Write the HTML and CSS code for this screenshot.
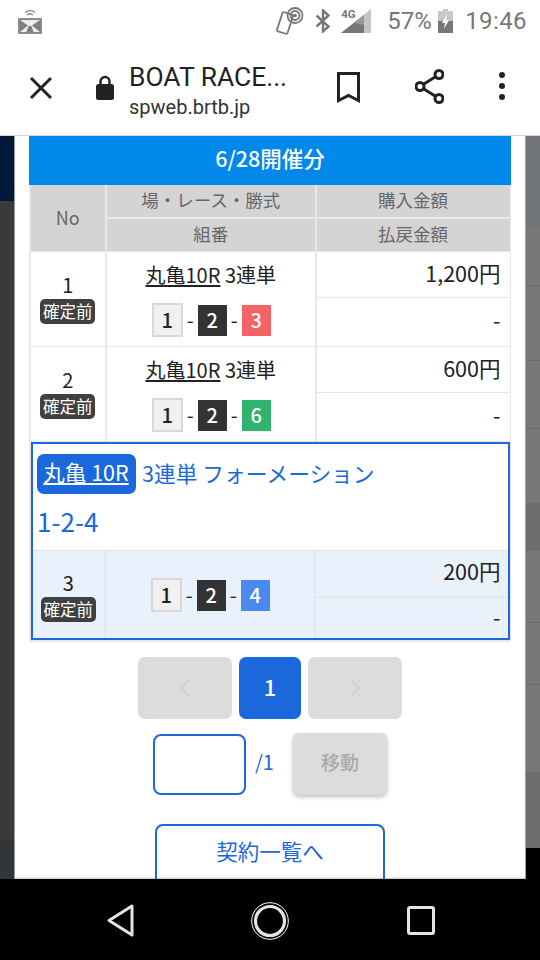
FILE: index.html
```html
<!DOCTYPE html>
<html lang="ja">
<head>
<meta charset="utf-8">
<title>BOAT RACE</title>
<link rel="stylesheet" href="styles.css">
</head>
<body>
<div class="phone">
  <header class="status">
    <svg class="ic-cast" viewBox="0 0 24 26"><g fill="none" stroke="#8a8a8a" stroke-width="1.4"><path d="M7 4.500a8 8 0 0 1 10 0"/><path d="M9 7a4.600 4.600 0 0 1 6 0"/></g><rect x="0" y="10" width="24" height="16" rx="1" fill="#8a8a8a"/><rect x="2" y="12" width="20" height="12" fill="#ececec"/><path d="M2 12l8 5.500L2 24zM22 12l-8 5.500 8 6.500zM10.500 18h3l2 6h-7z" fill="#808080"/></svg>
    <div class="status-right">
      <svg class="ic-nfc" viewBox="0 0 29 29"><g fill="none" stroke="#777" stroke-width="1.800"><rect x="4.500" y="6" width="11" height="20" rx="1.500" transform="rotate(18 10 16)"/><circle cx="20" cy="8.500" r="7.500"/><circle cx="20" cy="8.500" r="4.500"/></g><circle cx="20" cy="8.500" r="1.800" fill="#777"/></svg>
      <svg class="ic-bt" viewBox="0 0 16 24"><path d="M1.500 6.500l12 11-5.500 5V1.500l5.500 5-12 11" fill="none" stroke="#777" stroke-width="2.400"/></svg>
      <div class="net"><span class="net-label">4G</span><svg class="ic-sig" viewBox="0 0 30 24"><path d="M30 0v24H0z" fill="#c4c4c4"/><path d="M23 6v18H0z" fill="#777"/><path d="M23 6v10l-9-2z" fill="#999"/></svg></div>
      <span class="pct">57%</span>
      <svg class="ic-bat" viewBox="0 0 15 24"><path d="M5 0h5v2h5v22H0V2h5z" fill="#c8c8c8"/><path d="M0 12h15v12H0z" fill="#777"/><path d="M9 5L4 14h3l-1 6 5-9H8z" fill="#fff"/></svg>
      <span class="time">19:46</span>
    </div>
  </header>

  <nav class="toolbar">
    <svg class="ic-close" viewBox="0 0 24 24"><path d="M2 2l20 20M22 2L2 22" stroke="#222" stroke-width="3" fill="none"/></svg>
    <svg class="ic-lock" viewBox="0 0 18 25"><path d="M4.500 10V6.500a4.500 4.500 0 0 1 9 0V10" fill="none" stroke="#222" stroke-width="2.400"/><rect y="9" width="18" height="16" rx="2.500" fill="#222"/></svg>
    <div class="page-id">
      <div class="page-title">BOAT RACE...</div>
      <div class="page-url">spweb.brtb.jp</div>
    </div>
    <svg class="ic-mark" viewBox="0 0 23 31"><path d="M1.500 1.500h20v27l-10-5-10 5z" fill="none" stroke="#222" stroke-width="3"/></svg>
    <svg class="ic-share" viewBox="0 0 29 35"><g fill="none" stroke="#222" stroke-width="3"><circle cx="24" cy="5.500" r="4"/><circle cx="5" cy="17.500" r="4"/><circle cx="24" cy="29.500" r="4"/><path d="M8.500 15.300L20.500 7.700M8.500 19.700l12 7.600"/></g></svg>
    <svg class="ic-more" viewBox="0 0 6 28"><circle cx="3" cy="3" r="3" fill="#222"/><circle cx="3" cy="14" r="3" fill="#222"/><circle cx="3" cy="25" r="3" fill="#222"/></svg>
  </nav>

  <main class="stage">
    <div class="side side-left">
      <div class="bl-navy"></div>
      <div class="bl-dark"></div>
      <div class="bl-slate"></div>
    </div>

    <section class="modal">
      <h2 class="day-head">6/28開催分</h2>

      <div class="table">
        <div class="row row-head">
          <div class="cell head-no">No</div>
          <div class="stack">
            <div class="cell head-cell">場・レース・勝式</div>
            <div class="cell head-cell">組番</div>
          </div>
          <div class="stack">
            <div class="cell head-cell">購入金額</div>
            <div class="cell head-cell">払戻金額</div>
          </div>
        </div>

        <div class="row row-item">
          <div class="cell no-cell"><span class="no">1</span><span class="badge">確定前</span></div>
          <div class="cell bet-cell">
            <div class="bet-name"><a class="race-link">丸亀10R</a> 3連単</div>
            <div class="combo"><span class="tile t1">1</span>-<span class="tile t2">2</span>-<span class="tile t3">3</span></div>
          </div>
          <div class="stack">
            <div class="cell amount amt-top">1,200円</div>
            <div class="cell amount amt-bot">-</div>
          </div>
        </div>

        <div class="row row-item">
          <div class="cell no-cell"><span class="no">2</span><span class="badge">確定前</span></div>
          <div class="cell bet-cell">
            <div class="bet-name"><a class="race-link">丸亀10R</a> 3連単</div>
            <div class="combo"><span class="tile t1">1</span>-<span class="tile t2">2</span>-<span class="tile t6">6</span></div>
          </div>
          <div class="stack">
            <div class="cell amount amt-top">600円</div>
            <div class="cell amount amt-bot">-</div>
          </div>
        </div>

        <div class="selected">
          <div class="sel-info">
            <div class="sel-line"><a class="race-pill">丸亀 10R</a><span class="sel-type">3連単 フォーメーション</span></div>
            <div class="sel-combo">1-2-4</div>
          </div>
          <div class="row row-sel">
            <div class="cell no-cell"><span class="no">3</span><span class="badge">確定前</span></div>
            <div class="cell bet-cell">
              <div class="combo"><span class="tile t1">1</span>-<span class="tile t2">2</span>-<span class="tile t4">4</span></div>
            </div>
            <div class="stack">
              <div class="cell amount amt-top">200円</div>
              <div class="cell amount amt-bot">-</div>
            </div>
          </div>
        </div>
      </div>

      <div class="pager">
        <button class="pg pg-arrow"><svg class="chev" viewBox="0 0 12 20"><path d="M11 1L2 10l9 9" fill="none" stroke="#cfcfcf" stroke-width="1.600"/></svg></button>
        <button class="pg pg-on">1</button>
        <button class="pg pg-arrow"><svg class="chev" viewBox="0 0 12 20"><path d="M1 1l9 9-9 9" fill="none" stroke="#cfcfcf" stroke-width="1.600"/></svg></button>
      </div>

      <div class="jump">
        <div class="jump-input"></div>
        <span class="jump-total">/1</span>
        <button class="jump-btn">移動</button>
      </div>

      <a class="back-btn">契約一覧へ</a>
    </section>

    <div class="side side-right">
      <div class="br br1"></div>
      <div class="br br2"></div>
      <div class="br br3"></div>
      <div class="br br4"></div>
      <div class="br br5"></div>
      <div class="br br6"></div>
      <div class="br br7"></div>
      <div class="br br8"></div>
      <div class="br br9"></div>
      <div class="br br10"></div>
    </div>
  </main>

  <footer class="navbar">
    <svg class="ic-back" viewBox="0 0 27 33"><path d="M25 2v29L2 16.500z" fill="none" stroke="#e4e4e4" stroke-width="3" stroke-linejoin="round"/></svg>
    <svg class="ic-home" viewBox="0 0 38 38"><circle cx="19" cy="19" r="18.300" fill="none" stroke="#fff" stroke-width="1"/><circle cx="19" cy="19" r="14.500" fill="none" stroke="#e4e4e4" stroke-width="3.200"/></svg>
    <svg class="ic-recent" viewBox="0 0 28 29"><rect x="1.500" y="1.500" width="25" height="26" rx="1.500" fill="none" stroke="#e4e4e4" stroke-width="3"/></svg>
  </footer>
</div>
</body>
</html>
```

FILE: styles.css
```css
* { box-sizing: border-box; }
html, body { margin: 0; padding: 0; background: #000; }
body { font-family: "Noto Sans CJK JP", "Noto Sans", sans-serif; color: #222; }
svg { display: block; flex: none; }
a { color: inherit; }
button { font-family: inherit; border: 0; padding: 0; }

.phone { width: 540px; height: 960px; display: flex; flex-direction: column; overflow: hidden; }

/* status bar */
.status { height: 38px; flex: none; background: #fff; display: flex; justify-content: space-between; align-items: flex-start; padding: 8px 13px 0 18px; }
.status-right { display: flex; align-items: flex-start; margin-top: -1px; }
.ic-cast { width: 24px; height: 26px; }
.ic-nfc { width: 29px; height: 29px; margin-right: 11px; }
.ic-bt { width: 16px; height: 24px; margin: 2px 10px 0 0; }
.net { position: relative; width: 30px; height: 24px; margin: 2px 16px 0 0; }
.net-label { position: absolute; left: 0; top: -1px; font: 700 11.500px/12px Roboto, sans-serif; color: #777; }
.ic-sig { width: 30px; height: 24px; }
.pct { font: 400 24px/28px Roboto, sans-serif; color: #777; margin: 0 9px 0 0; width: 42px; white-space: nowrap; }
.ic-bat { width: 15px; height: 24px; margin: 2px 12px 0 0; }
.time { font: 400 24px/28px Roboto, sans-serif; color: #777; letter-spacing: .4px; white-space: nowrap; }

/* toolbar */
.toolbar { height: 98px; flex: none; background: #fff; border-bottom: 1px solid #d8d8d8; display: flex; align-items: center; padding: 0 0 6px 29px; }
.ic-close { width: 24px; height: 24px; margin: 8px 43px 0 0; }
.ic-lock { width: 18px; height: 25px; margin: 8px 15px 0 0; }
.page-id { width: 208px; flex: none; margin-top: 15px; font-family: Roboto, sans-serif; }
.page-title { font-size: 26.400px; line-height: 30px; color: #222; white-space: nowrap; }
.page-url { font-size: 20px; line-height: 26px; margin-top: 2px; color: #333; white-space: nowrap; }
.ic-mark { width: 23px; height: 31px; margin: 8px 55px 0 0; }
.ic-share { width: 29px; height: 35px; margin: 5px 55px 0 0; }
.ic-more { width: 6px; height: 28px; margin-top: 5px; }

/* stage */
.stage { flex: 1; min-height: 0; display: flex; overflow: hidden; }
.side { width: 15px; flex: none; display: flex; flex-direction: column; }
.side-left { border-right: 1px solid #9a9a9a; }
.bl-navy { height: 65px; background: #021838; }
.bl-dark { flex: 1; background: #3a3a3a; }
.bl-slate { height: 40px; background: #32363b; }
.side-right { border-left: 1px solid #a4a4a4; }
.br { flex: none; border-bottom: 1px solid #6a6a6a; background: #777; }
.br1 { height: 91px; background: #717579; border-bottom: 0; }
.br2 { height: 59px; }
.br3 { height: 75px; }
.br4 { height: 68px; }
.br5 { height: 74px; border-bottom: 0; }
.br6 { height: 47px; background: #6e6e6e; }
.br7 { height: 73px; }
.br8 { height: 62px; }
.br9 { height: 88px; }
.br10 { height: 75px; background: #6e6e6e; }

.modal { width: 510px; flex: none; background: #fff; padding: 0 14px; display: flex; flex-direction: column; align-items: stretch; box-shadow: inset 0 -2px 2px -1px rgba(0,0,0,.25); }
.modal > * { flex: none; }

.day-head { margin: 0; height: 49px; background: #0088ea; color: #fff; font-size: 21.500px; font-weight: 500; line-height: 44px; text-align: center; }

/* table */
.table { background: #e8e8e8; padding: 0 1.500px 2px; }
.row { display: grid; grid-template-columns: 74.500px 208.500px 1fr; gap: 1.500px; }
.row-head { height: 66px; margin-bottom: 1px; background: #e8e8e8; }
.row-item { height: 93.500px; margin-bottom: 1.500px; }
.stack { display: flex; flex-direction: column; gap: 1.500px; min-height: 0; }
.cell { background: #fff; }
.head-no, .head-cell { background: #d4d4d4; color: #666; display: flex; align-items: center; justify-content: center; }
.head-no { font-size: 18px; padding-bottom: 3px; }
.head-cell { flex: 1; font-size: 17.500px; line-height: 1; padding-bottom: 2px; }
.no-cell { display: flex; flex-direction: column; align-items: center; justify-content: flex-start; padding-top: 20px; }
.no { font-size: 20px; line-height: 26px; color: #222; }
.badge { width: 55px; height: 25px; margin-top: 1px; background: #404040; border-radius: 5px; color: #fff; font-size: 16.500px; line-height: 24px; text-align: center; white-space: nowrap; }
.bet-cell { display: flex; flex-direction: column; align-items: center; padding-top: 8px; }
.bet-name { font-size: 20px; line-height: 30px; color: #222; white-space: nowrap; }
.race-link { text-decoration: underline; text-underline-offset: 2px; }
.combo { display: flex; align-items: center; margin: 13px 0 0 1px; height: 34px; font-size: 20px; line-height: 1; color: #222; }
.tile { width: 29px; height: 31px; margin: 0 4px; display: flex; align-items: center; justify-content: center; font-size: 20px; font-weight: 500; color: #fff; }
.tile:first-child { margin-left: 0; }
.tile:last-child { margin-right: 0; }
.t1 { width: 31px; height: 34px; background: #f0f0f0; border: 2px solid #d8d8d8; color: #222; }
.t2 { background: #333; }
.t3 { background: #f56365; }
.t6 { background: #2fb36d; }
.t4 { background: #4a8af0; }
.amount { display: flex; align-items: flex-start; justify-content: flex-end; padding-right: 9px; font-size: 21.500px; line-height: 32px; color: #222; }
.amt-top { height: 44.500px; padding-top: 5px; }
.amt-bot { flex: 1; padding-top: 6px; }

/* selected block */
.selected { border: 2px solid #1a68dc; margin: 1px 0 0 0; background: #fff; height: 198px; display: flex; flex-direction: column; }
.sel-info { height: 107px; padding: 10px 0 0 4px; border-bottom: 1.500px solid #e0e0e0; color: #1a68dc; }
.sel-line { display: flex; align-items: center; height: 40px; }
.race-pill { width: 99px; height: 40px; background: #1a68dc; color: #fff; border-radius: 7px; font-size: 21.500px; line-height: 36px; text-align: center; text-decoration: underline; text-underline-offset: 2px; white-space: nowrap; }
.sel-type { margin: -2px 0 0 6.500px; font-size: 21.700px; line-height: 40px; white-space: nowrap; }
.sel-combo { font-size: 26px; line-height: 34px; margin: 10px 0 0 .5px; }
.row-sel { flex: 1; min-height: 0; background: #e4e8ee; grid-template-columns: 71.500px 208.500px 1fr; }
.row-sel .cell { background: #e9f1fc; }
.row-sel .no-cell { padding-top: 19px; }
.row-sel .bet-cell { padding-top: 11px; }
.row-sel .combo { margin-top: 16px; }
.row-sel .amt-top { height: 45px; padding-top: 4px; }
.row-sel .amt-bot { padding-top: 3px; }
.row-sel .amount { padding-right: 7px; }

/* pager */
.pager { display: flex; justify-content: center; gap: 7px; margin: 15px 0 0 0; }
.pg { height: 62px; border-radius: 7px; display: flex; align-items: center; justify-content: center; }
.pg-arrow { width: 94px; background: #dcdcdc; }
.pg-on { width: 62px; background: #1a68dc; color: #fff; font-size: 22px; font-weight: 500; padding-bottom: 5px; }
.chev { width: 12px; height: 20px; }

.jump { display: flex; align-items: center; margin: 14px 0 0 124px; }
.jump-input { width: 93px; height: 61px; border: 2px solid #1a68dc; border-radius: 8px; background: #fff; }
.jump-total { width: 47px; padding: 0 0 5px 9px; font-size: 20px; color: #1a68dc; }
.jump-btn { width: 94px; height: 62px; background: #dcdcdc; border-radius: 6px; color: #aaa; font-size: 19px; font-weight: 500; padding-bottom: 5px; box-shadow: 0 2px 4px rgba(0,0,0,.25); }

.back-btn { display: block; width: 230px; height: 66px; margin: 29px 0 0 126px; border: 2px solid #1a68dc; border-radius: 8px; color: #1a68dc; font-size: 21.500px; line-height: 50px; text-align: center; }

/* nav bar */
.navbar { position: relative; height: 81px; flex: none; background: #000; display: flex; align-items: flex-start; padding: 25px 0 0 107px; }
.ic-back { width: 27px; height: 33px; margin-right: 117px; }
.ic-home { width: 38px; height: 38px; margin: -2px 118px 0 0; }
.ic-recent { width: 28px; height: 29px; margin-top: 2px; }
```
